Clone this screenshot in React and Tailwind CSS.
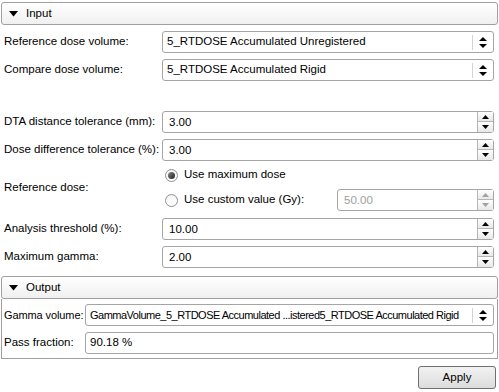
import React from "react";

const font = { fontFamily: '"Liberation Sans", Arial, sans-serif' };

function Header({ title }) {
  return (
    <div className="flex items-center h-[23px] mx-[1px] border border-[#a0a0a0] rounded-[3px] bg-gradient-to-b from-white to-[#f0f0f0]">
      <svg width="9" height="6" viewBox="0 0 9 6" className="ml-[7px]">
        <polygon points="0,0 9,0 4.5,5.5" fill="#000" />
      </svg>
      <span className="ml-[8px] text-[11.5px] text-black">{title}</span>
    </div>
  );
}

function Combo({ text, className = "", textClass = "text-[11.5px]" }) {
  return (
    <div className={"flex items-center min-w-0 h-[22px] border border-[#a5a5a5] rounded-[3px] bg-white " + className}>
      <span className={"flex-1 min-w-0 pl-[4px] text-black whitespace-nowrap overflow-hidden " + textClass}>{text}</span>
      <div className="w-px h-[15px] bg-[#d4d4d4]" />
      <div className="w-[20px] flex justify-center shrink-0">
        <svg width="8" height="11" viewBox="0 0 8 11">
          <polygon points="4,0 8,4 0,4" fill="#000" />
          <polygon points="0,7 8,7 4,11" fill="#000" />
        </svg>
      </div>
    </div>
  );
}

function Spin({ value, disabled = false, className = "" }) {
  const arrow = disabled ? "#a0a0a0" : "#000";
  return (
    <div className={"flex h-[22px] border border-[#a5a5a5] rounded-[3px] bg-white " + className}>
      <span className={"flex-1 pl-[6px] text-[11.5px] leading-[20px] " + (disabled ? "text-[#a0a0a0]" : "text-black")}>{value}</span>
      <div className="w-[16px] flex flex-col">
        <div className="h-[10px] flex items-center justify-center border-l border-b border-[#b5b5b5] bg-gradient-to-b from-white to-[#e8e8e8]">
          <svg width="7" height="4" viewBox="0 0 7 4"><polygon points="3.5,0 7,4 0,4" fill={arrow} /></svg>
        </div>
        <div className="flex-1 flex items-center justify-center border-l border-[#b5b5b5] bg-gradient-to-b from-white to-[#e8e8e8]">
          <svg width="7" height="4" viewBox="0 0 7 4"><polygon points="0,0 7,0 3.5,4" fill={arrow} /></svg>
        </div>
      </div>
    </div>
  );
}

function Row({ label, children, className = "" }) {
  return (
    <div className={"flex items-center " + className}>
      <span className="w-[162px] shrink-0 pl-[4px] text-[11.5px] text-black whitespace-nowrap">{label}</span>
      <div className="flex-1 min-w-0 mr-[5px]">{children}</div>
    </div>
  );
}

function Radio({ checked }) {
  return (
    <div className="w-[13px] h-[13px] shrink-0 rounded-full border border-[#8e8f8f] bg-gradient-to-b from-[#f4f4f4] to-white flex items-center justify-center">
      {checked && <div className="w-[7px] h-[7px] rounded-full bg-gradient-to-br from-[#888] to-[#222]" />}
    </div>
  );
}

export default function App() {
  return (
    <div className="w-[499px] h-[392px] bg-white overflow-hidden" style={font}>
      <div className="pt-[2px]">
        <Header title="Input" />
      </div>
      <Row label="Reference dose volume:" className="mt-[6px]">
        <Combo text="5_RTDOSE Accumulated Unregistered" />
      </Row>
      <Row label="Compare dose volume:" className="mt-[6px]">
        <Combo text="5_RTDOSE Accumulated Rigid" />
      </Row>
      <Row label="DTA distance tolerance (mm):" className="mt-[30px]">
        <Spin value="3.00" />
      </Row>
      <Row label="Dose difference tolerance (%):" className="mt-[6px]">
        <Spin value="3.00" />
      </Row>
      <div className="flex items-center mt-[3px]">
        <span className="w-[162px] shrink-0 pl-[4px] text-[11.5px] text-black">Reference dose:</span>
        <div className="flex-1 flex flex-col mr-[5px]">
          <div className="flex items-center h-[22px] pl-[3px] gap-[6px]">
            <Radio checked />
            <span className="text-[11.5px] text-black">Use maximum dose</span>
          </div>
          <div className="flex items-center h-[22px] pl-[3px] gap-[6px] mt-[3px]">
            <Radio />
            <span className="text-[11.5px] text-black w-[147px] shrink-0">Use custom value (Gy):</span>
            <Spin value="50.00" disabled className="flex-1" />
          </div>
        </div>
      </div>
      <Row label="Analysis threshold (%):" className="mt-[7px]">
        <Spin value="10.00" />
      </Row>
      <Row label="Maximum gamma:" className="mt-[6px]">
        <Spin value="2.00" />
      </Row>
      <div className="mt-[8px]">
        <Header title="Output" />
      </div>
      <div className="mx-[1px] border border-t-0 border-[#a0a0a0] pt-[5px] pb-[4px] pl-[2px] pr-[3px] flex flex-col gap-[6px]">
        <div className="flex items-center">
          <span className="w-[81px] shrink-0 text-[11px] tracking-[-0.1px] text-black whitespace-nowrap">Gamma volume:</span>
          <Combo
            text="GammaVolume_5_RTDOSE Accumulated ...istered5_RTDOSE Accumulated Rigid"
            className="flex-1"
            textClass="text-[11px] tracking-[-0.5px]"
          />
        </div>
        <div className="flex items-center">
          <span className="w-[81px] shrink-0 text-[11.5px] text-black whitespace-nowrap">Pass fraction:</span>
          <div className="flex-1 h-[22px] border border-[#a5a5a5] rounded-[3px] bg-white flex items-center pl-[4px] text-[11.5px] text-black">90.18 %</div>
        </div>
      </div>
      <div className="flex justify-end mt-[7px] mr-[3px]">
        <button className="w-[78px] h-[23px] border border-[#707070] rounded-[3px] bg-gradient-to-b from-[#f2f2f2] to-[#dcdcdc] text-[11.5px] text-black">Apply</button>
      </div>
    </div>
  );
}
